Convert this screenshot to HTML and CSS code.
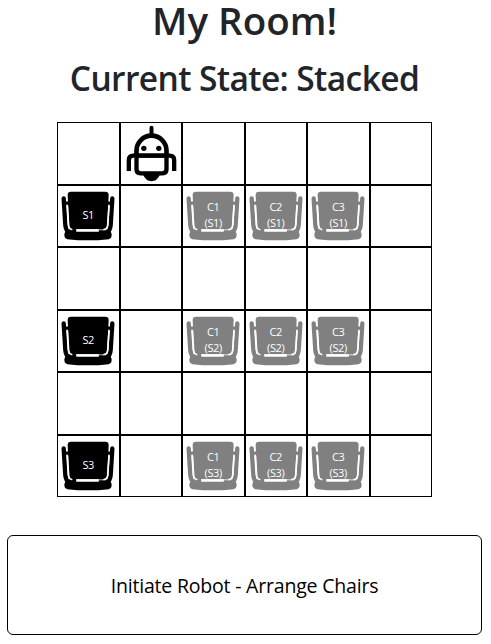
FILE: index.html
```html
<!DOCTYPE html>
<html lang="en">
<head>
<meta charset="utf-8">
<title>My Room!</title>
<link rel="stylesheet" href="styles.css">
</head>
<body>
<svg class="defs" aria-hidden="true">
  <symbol id="chair" viewBox="6 4.5 181.5 181.5">
    <path fill="currentColor" d="M45 22H148Q158 22 158 32L153 135H128V134H61V141H40L35 32Q35 22 45 22Z"/>
    <path fill="currentColor" d="M37 137H61V141H128V137H155Q167 139 167 151Q167 162 158 164Q96 171 34 164Q25 162 25 151Q25 139 37 137Z"/>
    <path fill="none" stroke="currentColor" stroke-width="13" stroke-linecap="round" d="M23 42L28 122Q29 137 40 145M169 42L164 122Q163 137 152 145"/>
    <path fill="none" stroke="currentColor" stroke-width="10" d="M23 56H40M169 56H152"/>
    <path fill="none" stroke="#fff" stroke-width="5" stroke-linecap="round" d="M34 65L38 123Q39 133 47 135M159 65L155 123Q154 133 144 135"/>
    <path fill="#fff" d="M61 134H128V141H61Z"/>
  </symbol>
  <symbol id="robot" viewBox="7.5 9 181.5 181.5">
    <g fill="none" stroke="currentColor" stroke-width="14">
      <path stroke-width="12" stroke-linecap="round" d="M99 23V44"/>
      <path d="M54 107V92A45 45 0 0 1 144 92V107"/>
      <path stroke-width="13" d="M54 107V148Q54 160 66 160H132Q144 160 144 148V107Z"/>
      <path stroke-width="13" d="M31 153V120Q31 107 44 107H154Q167 107 167 120V153"/>
    </g>
    <circle cx="76" cy="85" r="8" fill="currentColor"/>
    <circle cx="121" cy="85" r="8" fill="currentColor"/>
    <path fill="currentColor" d="M73 163H125Q116 184 99 184Q82 184 73 163Z"/>
  </symbol>
</svg>
<h1>My Room!</h1>
<h2>Current State: Stacked</h2>
<main class="room">
  <div class="cell"></div><div class="cell"><svg><use href="#robot"/></svg></div><div class="cell"></div><div class="cell"></div><div class="cell"></div><div class="cell"></div>

  <div class="cell"><svg><use href="#chair"/></svg><span>S1</span></div><div class="cell"></div>
  <div class="cell slot"><svg><use href="#chair"/></svg><span>C1<br>(S1)</span></div>
  <div class="cell slot"><svg><use href="#chair"/></svg><span>C2<br>(S1)</span></div>
  <div class="cell slot"><svg><use href="#chair"/></svg><span>C3<br>(S1)</span></div><div class="cell"></div>

  <div class="cell"></div><div class="cell"></div><div class="cell"></div><div class="cell"></div><div class="cell"></div><div class="cell"></div>

  <div class="cell"><svg><use href="#chair"/></svg><span>S2</span></div><div class="cell"></div>
  <div class="cell slot"><svg><use href="#chair"/></svg><span>C1<br>(S2)</span></div>
  <div class="cell slot"><svg><use href="#chair"/></svg><span>C2<br>(S2)</span></div>
  <div class="cell slot"><svg><use href="#chair"/></svg><span>C3<br>(S2)</span></div><div class="cell"></div>

  <div class="cell"></div><div class="cell"></div><div class="cell"></div><div class="cell"></div><div class="cell"></div><div class="cell"></div>

  <div class="cell"><svg><use href="#chair"/></svg><span>S3</span></div><div class="cell"></div>
  <div class="cell slot"><svg><use href="#chair"/></svg><span>C1<br>(S3)</span></div>
  <div class="cell slot"><svg><use href="#chair"/></svg><span>C2<br>(S3)</span></div>
  <div class="cell slot"><svg><use href="#chair"/></svg><span>C3<br>(S3)</span></div><div class="cell"></div>
</main>
<button class="start" type="button">Initiate Robot - Arrange Chairs</button>
</body>
</html>
```
FILE: styles.css
```css
* { box-sizing: border-box; }
body {
  margin: 0;
  background: #fff;
  color: #212529;
  font-family: "Open Sans", "Noto Sans", sans-serif;
}
.defs { display: none; }
h1, h2 {
  margin: 0;
  padding-right: 2px;
  text-align: center;
  font-weight: 600;
  white-space: nowrap;
}
h1 { height: 54px; font-size: 38.5px; line-height: 41px; letter-spacing: 0; }
h2 { height: 68px; font-size: 33.5px; line-height: 48px; letter-spacing: -0.6px; }
.room {
  display: grid;
  grid-template-columns: repeat(6, 62.5px);
  grid-auto-rows: 62.5px;
  width: 375px;
  margin-left: 57px;
}
.cell {
  display: grid;
  grid-template: 60.5px / 60.5px;
  border: 1px solid #000;
  color: #000;
}
.cell svg {
  grid-area: 1 / 1;
  display: block;
  width: 60.5px;
  height: 60.5px;
}
.cell span {
  grid-area: 1 / 1;
  place-self: center;
  position: relative;
  padding-bottom: 2px;
  color: #fff;
  font-size: 11px;
  line-height: 16px;
  letter-spacing: -0.3px;
  text-align: center;
}
.slot { color: #808080; }
.start {
  display: block;
  width: 475px;
  height: 100px;
  margin: 38px 0 0 7px;
  padding: 2px 0 0;
  border: 1px solid #000;
  border-radius: 6px;
  background: #fff;
  color: #000;
  font: 400 19.5px/30px "Open Sans", "Noto Sans", sans-serif;
  letter-spacing: -0.2px;
}
```
